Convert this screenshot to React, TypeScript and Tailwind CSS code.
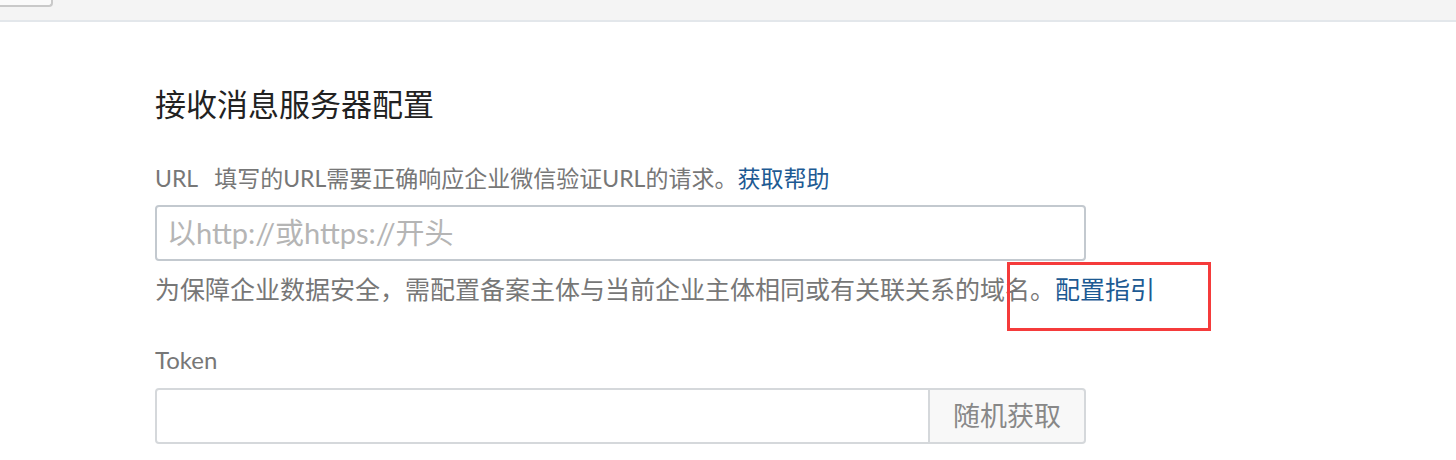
import React from "react";

export default function App() {
  const font = { fontFamily: 'Lato, "Noto Sans CJK SC", sans-serif' };
  return (
    <div className="relative w-[1456px] h-[460px] bg-white overflow-hidden" style={font}>
      <div className="h-[22px] bg-[#f4f4f4] border-b-2 border-[#e3e7eb]">
        <div className="w-[53px] h-[7px] bg-[#fafafa] border-r-2 border-b-2 border-[#c9c9c9] rounded-br-[4px]" />
      </div>
      <div className="pl-[155px]">
        <h1 className="mt-[62px] text-[31px] leading-[40px] text-[#222] font-normal">接收消息服务器配置</h1>
        <div className="mt-[39px] text-[23px] leading-[30px] text-[#777]">
          <span>URL</span>
          <span className="ml-[16px]">填写的URL需要正确响应企业微信验证URL的请求。</span>
          <a className="text-[#1d5a93]">获取帮助</a>
        </div>
        <div className="mt-[12px] w-[931px] h-[56px] border-2 border-[#c3c9cf] rounded-[4px] flex items-center pl-[10px]">
          <span className="text-[29px] text-[#b5b5b5]">以http://或https://开头</span>
        </div>
        <div className="mt-[11px] text-[25px] leading-[34px] text-[#777]">
          为保障企业数据安全，需配置备案主体与当前企业主体相同或有关联关系的域名。
          <a className="text-[#1d5a93]">配置指引</a>
        </div>
        <div className="mt-[39px] text-[24px] leading-[30px] text-[#777]">Token</div>
        <div className="mt-[13px] w-[931px] h-[56px] flex">
          <div className="flex-1 border-2 border-[#d5d8db] rounded-l-[4px]" />
          <div className="w-[156px] border-2 border-l-0 border-[#d5d8db] rounded-r-[4px] bg-[#f8f8f8] flex items-center justify-center text-[27px] text-[#888]">
            随机获取
          </div>
        </div>
      </div>
      <div className="absolute left-[1007px] top-[262px] w-[204px] h-[69px] border-[3px] border-[#f53b3b]" />
    </div>
  );
}
